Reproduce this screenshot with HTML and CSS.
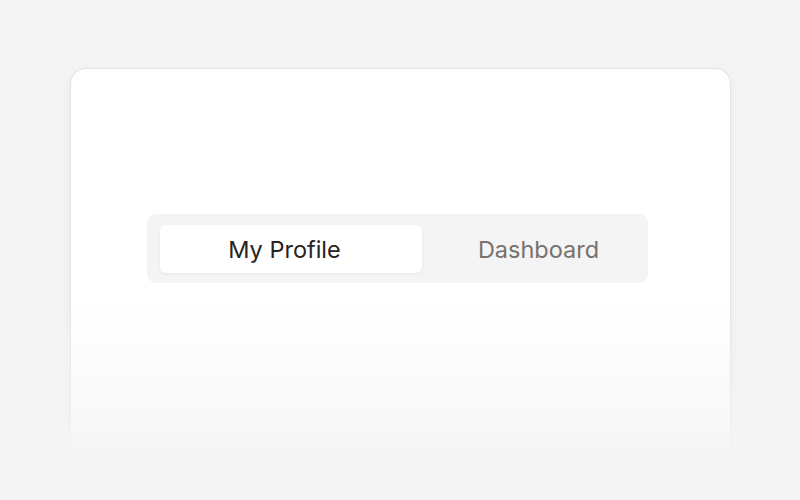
FILE: index.html
```html
<!DOCTYPE html>
<html lang="en">
<head>
<meta charset="utf-8">
<title>Tabs</title>
<link rel="stylesheet" href="styles.css">
</head>
<body>
<main class="card">
  <div class="tabs" role="tablist">
    <button class="tab tab-active" role="tab" aria-selected="true">My Profile</button>
    <button class="tab tab-idle" role="tab" aria-selected="false">Dashboard</button>
  </div>
</main>
<div class="fade"></div>
</body>
</html>
```
FILE: styles.css
```css
html, body {
  margin: 0;
  padding: 0;
}
body {
  width: 800px;
  height: 500px;
  overflow: hidden;
  background: #f4f4f4;
  font-family: Inter, "Noto Sans", "Liberation Sans", sans-serif;
}
.card {
  box-sizing: border-box;
  width: 661px;
  height: 432px;
  margin: 68px 0 0 70px;
  background: #fff;
  border: 1px solid #e4e4e4;
  border-bottom: 0;
  border-radius: 16px 16px 0 0;
  box-shadow: 0 2px 8px rgba(0, 0, 0, 0.05);
  padding: 145px 0 0 76px;
}
.tabs {
  box-sizing: border-box;
  width: 501px;
  height: 69px;
  display: flex;
  align-items: stretch;
  padding: 11px 12px 10px 13px;
  background: #f4f4f4;
  border-radius: 9px;
}
.tab {
  border: 0;
  margin: 0;
  background: transparent;
  font-family: inherit;
  font-size: 23.5px;
  font-weight: 400;
  display: flex;
  align-items: center;
  justify-content: center;
  padding-top: 2px;
  cursor: pointer;
}
.tab-active {
  width: 262px;
  padding-right: 13px;
  padding-left: 0;
  background: #fff;
  color: #262322;
  border-radius: 6px;
  box-shadow: 0 1px 3px rgba(0, 0, 0, 0.06);
}
.tab-idle {
  flex: 1;
  padding-left: 19px;
  padding-right: 0;
  color: #78716c;
}
.fade {
  position: fixed;
  left: 0;
  right: 0;
  bottom: 0;
  height: 200px;
  background: linear-gradient(to bottom, rgba(244, 244, 244, 0) 0%, rgba(244, 244, 244, 0.6) 60%, #f4f4f4 80%);
  pointer-events: none;
}
```
